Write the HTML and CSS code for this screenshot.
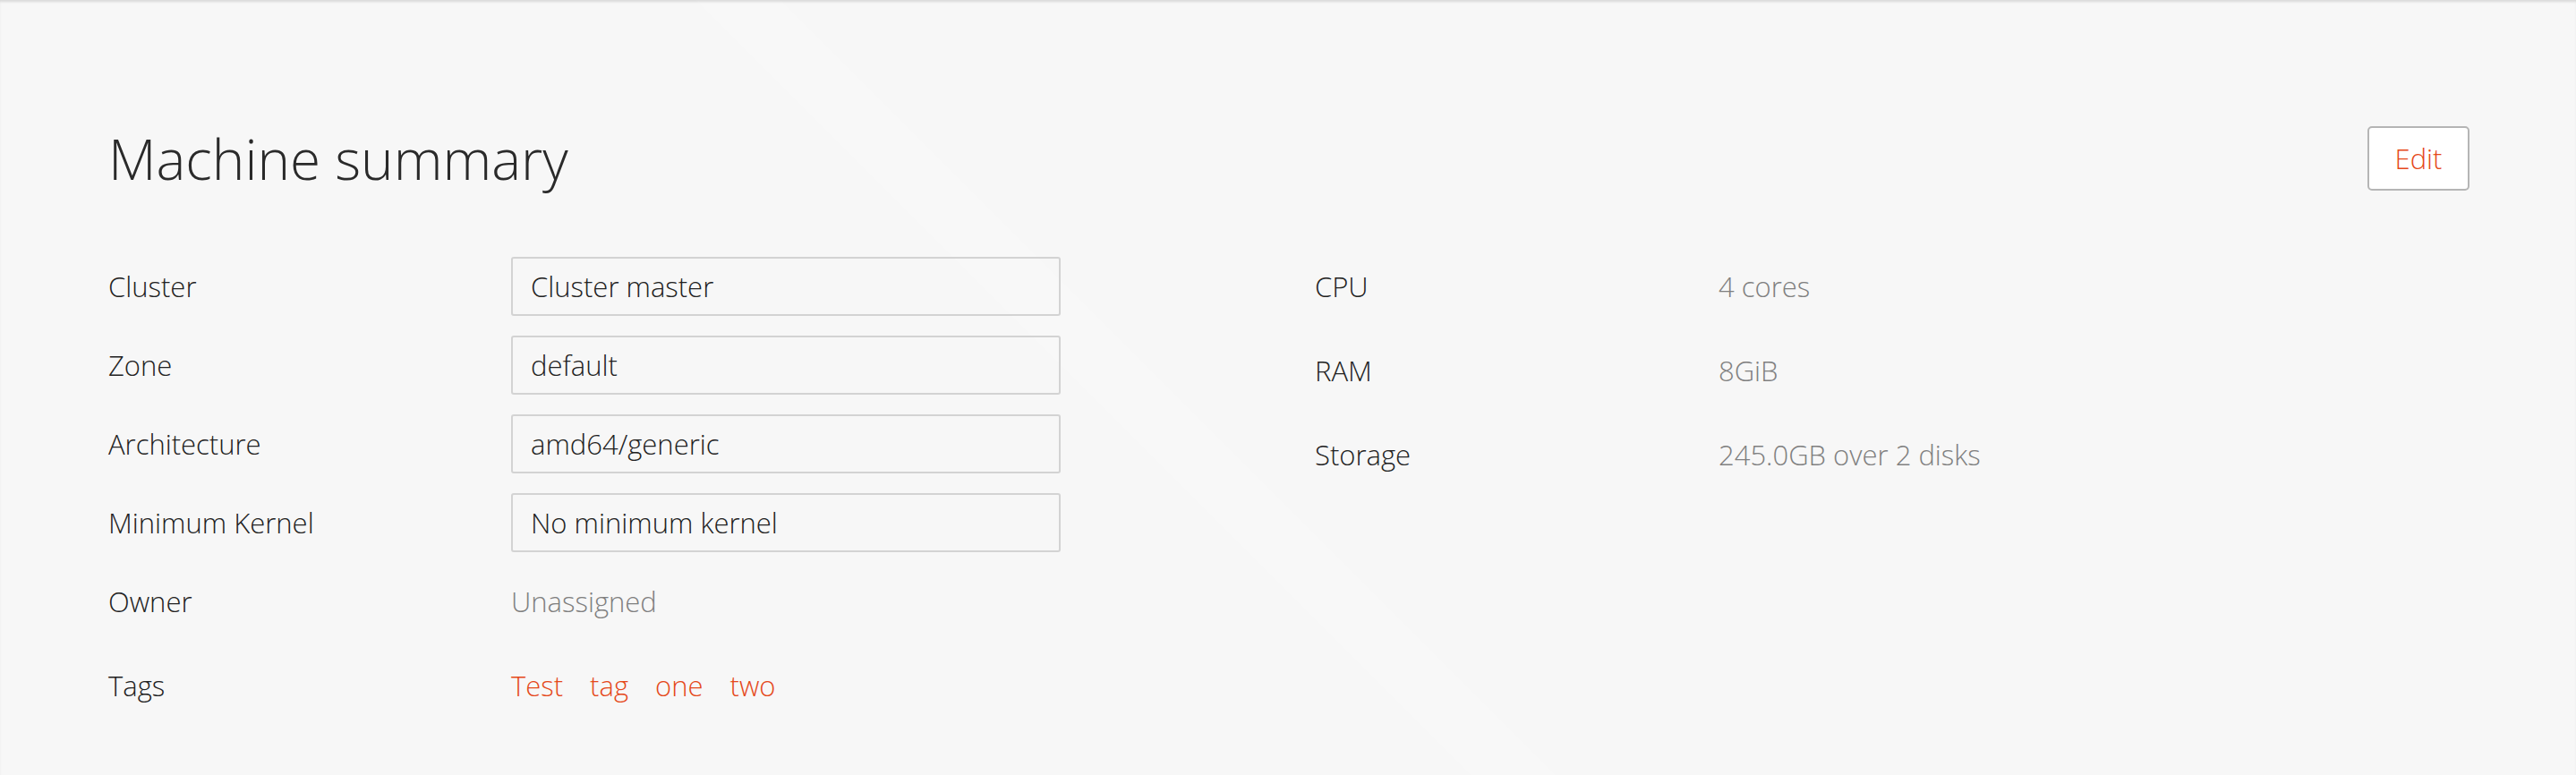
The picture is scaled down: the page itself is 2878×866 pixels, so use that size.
FILE: index.html
```html
<!DOCTYPE html>
<html lang="en">
<head>
<meta charset="utf-8">
<title>Machine summary</title>
<link rel="stylesheet" href="styles.css">
</head>
<body>
<main class="page">
  <section class="summary">
    <header class="summary-head">
      <h2 class="summary-title">Machine summary</h2>
      <button class="btn" type="button">Edit</button>
    </header>
    <div class="summary-cols">
      <dl class="fields">
        <div class="row">
          <dt class="label">Cluster</dt>
          <dd class="value"><span class="field">Cluster master</span></dd>
        </div>
        <div class="row">
          <dt class="label">Zone</dt>
          <dd class="value"><span class="field">default</span></dd>
        </div>
        <div class="row">
          <dt class="label">Architecture</dt>
          <dd class="value"><span class="field">amd64/generic</span></dd>
        </div>
        <div class="row">
          <dt class="label">Minimum Kernel</dt>
          <dd class="value"><span class="field">No minimum kernel</span></dd>
        </div>
        <div class="row row-text">
          <dt class="label">Owner</dt>
          <dd class="value muted">Unassigned</dd>
        </div>
        <div class="row row-text">
          <dt class="label">Tags</dt>
          <dd class="value tags">
            <a class="tag" href="#">Test</a>
            <a class="tag" href="#">tag</a>
            <a class="tag" href="#">one</a>
            <a class="tag" href="#">two</a>
          </dd>
        </div>
      </dl>
      <dl class="specs">
        <div class="row row-text">
          <dt class="label">CPU</dt>
          <dd class="value muted">4 cores</dd>
        </div>
        <div class="row row-text">
          <dt class="label">RAM</dt>
          <dd class="value muted">8GiB</dd>
        </div>
        <div class="row row-text">
          <dt class="label">Storage</dt>
          <dd class="value muted">245.0GB over 2 disks</dd>
        </div>
      </dl>
    </div>
  </section>
</main>
</body>
</html>
```
FILE: styles.css
```css
* { box-sizing: border-box; }

html, body {
  margin: 0;
  padding: 0;
}

body {
  font-family: "Open Sans", "Noto Sans", "Liberation Sans", sans-serif;
  font-weight: 300;
  color: #222;
  background: #f7f7f7;
}

.page {
  width: 2878px;
  height: 866px;
  overflow: hidden;
  background:
    linear-gradient(45deg,
      rgba(255,255,255,0) 0%,
      rgba(255,255,255,0) 43.9%,
      rgba(255,255,255,0.18) 43.9%,
      rgba(255,255,255,0.18) 46.4%,
      rgba(255,255,255,0) 46.4%,
      rgba(255,255,255,0) 100%),
    #f7f7f7;
  box-shadow: inset 0 3px 3px -1px rgba(0, 0, 0, 0.12);
}

.summary {
  padding: 141px 119px 0 121px;
}

.summary-head {
  display: flex;
  align-items: center;
  justify-content: space-between;
  height: 72px;
}

.summary-title {
  margin: 0;
  font-size: 62px;
  line-height: 72px;
  font-weight: 300;
  color: #2a2a2a;
}

.btn {
  width: 114px;
  height: 72px;
  padding: 0;
  border: 2px solid #b5b5b5;
  border-radius: 5px;
  background: #fff;
  color: #e5491a;
  font-family: inherit;
  font-weight: 300;
  font-size: 31px;
  line-height: 66px;
}

.summary-cols {
  display: grid;
  grid-template-columns: 1fr 1fr;
  column-gap: 58px;
  margin-top: 74px;
}

.fields, .specs {
  margin: 0;
  display: flex;
  flex-direction: column;
  gap: 22px;
}

.fields .row {
  display: grid;
  grid-template-columns: 450px 614px;
}

.specs .row {
  display: grid;
  grid-template-columns: 451px 1fr;
}

.label, .value {
  margin: 0;
  font-size: 31px;
  line-height: 66px;
  white-space: nowrap;
}

.label { color: #222; }

.row-text { padding-bottom: 6px; }

.field {
  display: block;
  height: 66px;
  padding: 0 20px;
  border: 2px solid #d3d3d3;
  border-radius: 3px;
  line-height: 62px;
  color: #222;
}

.muted { color: #808080; }

.tags {
  display: flex;
  gap: 30px;
}

.tag {
  color: #e5491a;
  text-decoration: none;
}
```
